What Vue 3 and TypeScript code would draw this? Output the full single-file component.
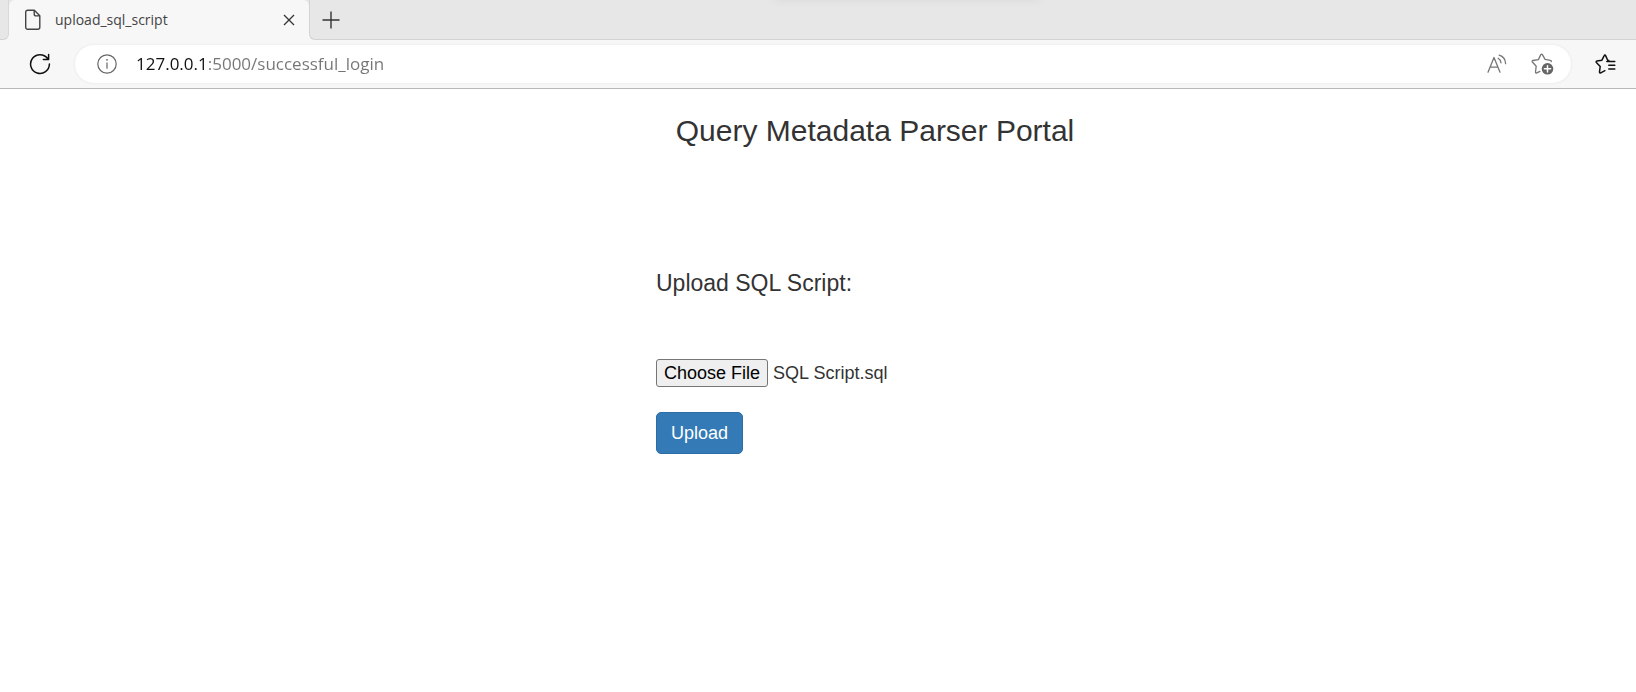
<script setup lang="ts">
import { onMounted, ref } from 'vue'

const tabTitle = 'upload_sql_script'
const address = ref('127.0.0.1:5000/successful_login')
const fileInput = ref<HTMLInputElement | null>(null)

onMounted(() => {
  const transfer = new DataTransfer()
  transfer.items.add(new File(['select 1;'], 'SQL Script.sql', { type: 'application/sql' }))
  if (fileInput.value) fileInput.value.files = transfer.files
})
</script>

<template>
  <div class="browser">
    <header>
      <div class="tabs">
        <div class="lead"></div>
        <div class="tab">
          <svg width="18" height="22" viewBox="0 0 18 22" fill="none" stroke="#444" stroke-width="1.4" stroke-linejoin="round">
            <path d="M4 1.2h6.3l5.5 5.5v11.6a2 2 0 0 1-2 2H3.7a2 2 0 0 1-2-2V3.2a2 2 0 0 1 2-2ZM10.2 1.4v3.5a2 2 0 0 0 2 2h3.4" />
          </svg>
          <span class="tab-title">{{ tabTitle }}</span>
          <button type="button" class="icon" aria-label="Close tab">
            <svg width="12" height="12" viewBox="0 0 12 12" fill="none" stroke="#333" stroke-width="1.3"><path d="m1 1 10 10M11 1 1 11" /></svg>
          </button>
        </div>
        <div class="rest">
          <button type="button" class="icon" aria-label="New tab">
            <svg width="18" height="18" viewBox="0 0 18 18" fill="none" stroke="#333" stroke-width="1.4"><path d="M9 .5v17M.5 9h17" /></svg>
          </button>
          <span class="top-shadow"></span>
        </div>
      </div>
      <div class="toolbar">
        <button type="button" class="icon" aria-label="Refresh">
          <svg width="22" height="22" viewBox="0 0 22 22" fill="none" stroke="#111" stroke-width="1.5" stroke-linecap="round" stroke-linejoin="round">
            <path d="M20.4 11A9.4 9.4 0 1 1 18.6 5.5M19.6 1.5v5h-5.2" />
          </svg>
        </button>
        <div class="address">
          <button type="button" class="icon" aria-label="Site information">
            <svg width="20" height="20" viewBox="0 0 20 20" fill="none" stroke="#666" stroke-width="1.2">
              <circle cx="10" cy="10" r="9.2" /><path d="M10 8.5v6.2" /><circle cx="10" cy="5.8" r=".9" fill="#666" stroke="none" />
            </svg>
          </button>
          <input v-model="address" type="text" aria-label="Address" spellcheck="false" />
          <button type="button" class="icon" aria-label="Read aloud">
            <svg width="20" height="20" viewBox="0 0 20 20" fill="none" stroke="#767676" stroke-width="1.3" stroke-linecap="round" stroke-linejoin="round">
              <path d="M1 18.2 7 3.5l6 14.7M3.1 13.2h7.8M11.2 4.2c1.6.9 2.6 2.6 2.8 4.6M12.2 1.1c3.9 1.2 6.3 4.4 6.4 8.6" />
            </svg>
          </button>
          <button type="button" class="icon" aria-label="Add to favorites">
            <svg width="23" height="22" viewBox="0 0 23 22" fill="none" stroke="#767676" stroke-width="1.3" stroke-linecap="round" stroke-linejoin="round">
              <path d="M20.2 8.7c.3-.7-.1-1.3-.8-1.4l-5.3-.9-2.7-4.8c-.4-.7-1.2-.7-1.6 0L7.4 6.6l-5.5.9c-.8.2-1 .9-.5 1.5l3.8 4.2-.7 5.8c-.1.8.6 1.2 1.3.9l3.1-1.5" />
              <circle cx="16.5" cy="15.8" r="5.8" fill="#666" stroke="none" /><path d="M16.5 12.7v6.2M13.4 15.8h6.2" stroke="#fff" stroke-width="1.5" />
            </svg>
          </button>
        </div>
        <button type="button" class="icon" aria-label="Favorites">
          <svg width="21" height="20" viewBox="0 0 21 20" fill="none" stroke="#111" stroke-width="1.5" stroke-linecap="round" stroke-linejoin="round">
            <path d="M13.8 6.5 12.7 6.3 10.6 1.6c-.3-.7-1.1-.7-1.4 0L6.9 6.2l-5 .9c-.8.2-1 .9-.5 1.4l3.8 4-.7 5.4c-.1.8.6 1.2 1.3.9l4.1-2.1M11.8 7.5h8M13.8 11.3h6M13.8 15.1h6" />
          </svg>
        </button>
      </div>
    </header>
    <main>
      <form @submit.prevent>
        <h1>Query Metadata Parser Portal</h1>
        <label for="script-file">Upload SQL Script:</label>
        <input id="script-file" ref="fileInput" type="file" />
        <button type="submit" class="upload">Upload</button>
      </form>
    </main>
  </div>
</template>

<style>
body {
  margin: 0;
  background: #fff;
}
</style>

<style scoped>
* {
  box-sizing: border-box;
}
.browser {
  font-family: "Liberation Sans", Arial, sans-serif;
  color: #333;
}
header {
  background: #f7f7f7;
  border-bottom: 1px solid #b8b8b8;
  font-family: "Open Sans", "Noto Sans", sans-serif;
}
.icon {
  display: flex;
  flex: none;
  padding: 0;
  border: 0;
  background: none;
}
.tabs {
  display: flex;
  height: 40px;
  background: linear-gradient(to bottom, #e7e7e7 20px, #f7f7f7 20px);
}
.lead,
.rest {
  background: #e7e7e7;
  border-bottom: 1px solid #d3d3d3;
}
.lead {
  width: 9px;
  border-right: 1px solid #d9d9d9;
  border-bottom-right-radius: 6px;
}
.tab {
  display: flex;
  align-items: center;
  width: 300px;
  padding: 0 14px 0 15px;
  border-radius: 6px 6px 0 0;
  background: #f7f7f7;
}
.tab-title {
  flex: 1;
  margin-left: 13px;
  font-size: 14px;
  line-height: 20px;
  color: #444;
}
.rest {
  position: relative;
  display: flex;
  flex: 1;
  align-items: center;
  padding-left: 12px;
  border-left: 1px solid #d3d3d3;
  border-bottom-left-radius: 6px;
  overflow: hidden;
}
.top-shadow {
  position: absolute;
  left: 35%;
  top: -6px;
  width: 20%;
  height: 4px;
  box-shadow: 0 0 10px #c8c8c8;
}
.toolbar {
  display: flex;
  align-items: center;
  height: 48px;
  padding: 0 20px 0 29px;
}
.address {
  display: flex;
  flex: 1;
  align-items: center;
  gap: 24px;
  height: 38px;
  margin: 0 24px;
  padding: 0 17px 0 22px;
  border-radius: 19px;
  background: #fff;
  box-shadow: 0 0 3px #e4e4e4;
}
.address input {
  flex: 1;
  min-width: 0;
  margin-left: -5px;
  padding: 0;
  border: 0;
  outline: 0;
  background: linear-gradient(to right, #111 70px, #757575 70px);
  background-clip: text;
  -webkit-background-clip: text;
  -webkit-text-fill-color: transparent;
  font-family: inherit;
  font-size: 17px;
  line-height: 24px;
}
main {
  display: grid;
  grid-template-columns: 656fr 438fr 542fr;
}
form {
  display: flex;
  flex-direction: column;
  grid-column: 2;
  align-items: flex-start;
  padding: 25px 0;
}
h1 {
  align-self: center;
  margin: 0;
  font-size: 30px;
  font-weight: 400;
  line-height: 34px;
  white-space: nowrap;
}
label {
  margin-top: 122px;
  font-size: 23px;
  line-height: 26px;
}
#script-file {
  width: 100%;
  margin-top: 63px;
  font-family: inherit;
  font-size: 18px;
  color: #333;
}
#script-file::file-selector-button {
  height: 28px;
  margin-right: 5px;
  padding: 1px 7px;
  border: 1px solid #767676;
  border-radius: 3px;
  background: #efefef;
  color: #000;
  font-family: inherit;
  font-size: 18px;
}
.upload {
  height: 42px;
  margin-top: 25px;
  padding: 0 14px;
  border: 1px solid #2e6da4;
  border-radius: 5px;
  background: #337ab7;
  color: #fff;
  font-family: inherit;
  font-size: 18px;
}
</style>
